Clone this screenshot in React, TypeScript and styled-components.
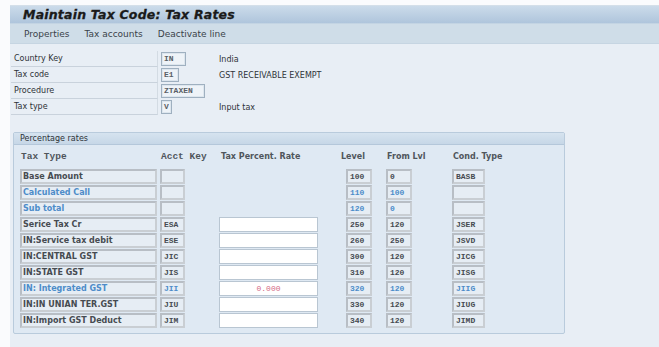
import styled, { createGlobalStyle } from 'styled-components';

const GlobalStyle = createGlobalStyle`
  html, body {
    margin: 0;
    padding: 0;
    background: #fafbfd;
    font-family: "DejaVu Sans", Verdana, sans-serif;
  }
`;

// header fields at the top of the screen
const headerFields = [
    { label: 'Country Key', value: 'IN', width: 25, text: 'India' },
    { label: 'Tax code', value: 'E1', width: 18, text: 'GST RECEIVABLE EXEMPT' },
    { label: 'Procedure', value: 'ZTAXEN', width: 44, text: '' },
    { label: 'Tax type', value: 'V', width: 11, text: 'Input tax' },
];

// percentage rate lines
const rates = [
    { type: 'Base Amount', key: '', rate: null, level: '100', from: '0', cond: 'BASB', blue: false },
    { type: 'Calculated Call', key: '', rate: null, level: '110', from: '100', cond: '', blue: true },
    { type: 'Sub total', key: '', rate: null, level: '120', from: '0', cond: '', blue: true },
    { type: 'Serice Tax Cr', key: 'ESA', rate: '', level: '250', from: '120', cond: 'JSER', blue: false },
    { type: 'IN:Service tax debit', key: 'ESE', rate: '', level: '260', from: '250', cond: 'JSVD', blue: false },
    { type: 'IN:CENTRAL GST', key: 'JIC', rate: '', level: '300', from: '120', cond: 'JICG', blue: false },
    { type: 'IN:STATE GST', key: 'JIS', rate: '', level: '310', from: '120', cond: 'JISG', blue: false },
    { type: 'IN: Integrated GST', key: 'JII', rate: '0.000', level: '320', from: '120', cond: 'JIIG', blue: true },
    { type: 'IN:IN UNIAN TER.GST', key: 'JIU', rate: '', level: '330', from: '120', cond: 'JIUG', blue: false },
    { type: 'IN:Import GST Deduct', key: 'JIM', rate: '', level: '340', from: '120', cond: 'JIMD', blue: false },
];

const MONO = '"Liberation Mono", "DejaVu Sans Mono", monospace';
const SANS = '"DejaVu Sans", Verdana, sans-serif';

const Frame = styled.div`
  margin: 5px 0 0 10px;
  min-height: 342px;
  display: flex;
  flex-direction: column;
`;

const TitleBar = styled.div`
  height: 18px;
  display: flex;
  align-items: center;
  padding-left: 13px;
  background: linear-gradient(#cbdbea, #afc5dc);
  border-top: 1px solid #d4dfe9;
  box-sizing: border-box;
`;

const Title = styled.h1`
  margin: 0;
  font-family: ${SANS};
  font-size: 12.5px;
  font-weight: bold;
  font-style: italic;
  color: #1a1a1a;
  letter-spacing: 0.2px;
  -webkit-text-stroke: 0.3px #1a1a1a;
`;

const Toolbar = styled.div`
  height: 21px;
  display: flex;
  align-items: center;
  gap: 15px;
  padding-left: 14px;
  background: #cfdde8;
  border-top: 1px solid #c3d4e3;
  border-bottom: 1px solid #c6d5e2;
  box-sizing: border-box;
`;

const ToolItem = styled.span`
  font-size: 9px;
  color: #3a4248;
`;

const Content = styled.div`
  flex: 1;
  background: #e8eef5;
  padding: 7px 0 0 1px;
`;

const FieldRow = styled.div`
  height: 16px;
  display: flex;
  align-items: center;
`;

const FieldLabel = styled.div`
  width: 143px;
  height: 15px;
  line-height: 15px;
  padding-left: 3px;
  font-size: 8px;
  color: #2e3338;
  border-bottom: 1px solid #c9d2dc;
  border-right: 1px solid #d3dbe3;
`;

const MonoBox = styled.div<{ $w: number }>`
  width: ${(p) => p.$w}px;
  height: 14px;
  box-sizing: border-box;
  margin-left: 3px;
  padding-left: 2px;
  line-height: 11px;
  font-family: ${MONO};
  font-size: 8px;
  font-weight: bold;
  color: #5a5f66;
  background: #eef3f8;
  border: 1px solid #9fb0c0;
  box-shadow: inset 0 0 0 1px #dde6ee;
`;

const FieldText = styled.span`
  font-size: 8px;
  color: #2e3338;
`;

const Group = styled.div`
  margin: 17px 0 0 2px;
  width: 552px;
  height: 202px;
  box-sizing: border-box;
  background: #dfe9f3;
  border: 1px solid #b9cbdc;
  border-radius: 2px;
`;

const GroupHeader = styled.div`
  height: 11px;
  line-height: 11px;
  padding-left: 6px;
  font-size: 8px;
  color: #2e3338;
  background: linear-gradient(#d6e3ef, #c6d7e7);
  border-bottom: 1px solid #b4c7da;
`;

const Grid = styled.div`
  display: grid;
  grid-template-columns: 140px 59px 127px 40px 66px 32px;
  grid-auto-rows: 16px;
  padding: 7px 0 0 6px;
  align-items: center;
`;

const ColHead = styled.div<{ $mono?: boolean; $shift?: number }>`
  font-family: ${(p) => (p.$mono ? MONO : SANS)};
  font-size: ${(p) => (p.$mono ? 9.5 : 8)}px;
  font-weight: bold;
  color: #50565c;
  margin-left: ${(p) => p.$shift ?? 1}px;
  margin-top: ${(p) => (p.$mono ? -1 : 0)}px;
  white-space: nowrap;
  align-self: start;
`;

const Cell = styled.div<{ $w: number; $blue?: boolean; $mono?: boolean }>`
  width: ${(p) => p.$w}px;
  height: 15px;
  box-sizing: border-box;
  padding-left: ${(p) => (p.$mono ? 2 : 1)}px;
  line-height: 11px;
  font-family: ${(p) => (p.$mono ? MONO : SANS)};
  font-size: 8px;
  font-weight: bold;
  color: ${(p) => (p.$blue ? '#4d8cc9' : '#464b51')};
  background: #e6edf4;
  border: 2px solid #b8bec5;
  border-right-color: #c9ced3;
  border-bottom-color: #c9ced3;
  white-space: nowrap;
  overflow: hidden;
`;

const RateInput = styled.div`
  width: 99px;
  height: 15px;
  box-sizing: border-box;
  line-height: 13px;
  text-align: center;
  font-family: ${MONO};
  font-size: 8px;
  color: #d36a86;
  background: #fff;
  border: 1px solid #b9c6d2;
`;

const Empty = styled.div``;

function App() {
    return (
        <>
            <GlobalStyle />
            <Frame>
                <TitleBar>
                    <Title>Maintain Tax Code: Tax Rates</Title>
                </TitleBar>
                <Toolbar>
                    <ToolItem>Properties</ToolItem>
                    <ToolItem>Tax accounts</ToolItem>
                    <ToolItem>Deactivate line</ToolItem>
                </Toolbar>
                <Content>
                    {headerFields.map((f) => (
                        <FieldRow key={f.label}>
                            <FieldLabel>{f.label}</FieldLabel>
                            <MonoBox $w={f.width}>{f.value}</MonoBox>
                            {f.text && <FieldText style={{ marginLeft: 221 - 163 - f.width }}>{f.text}</FieldText>}
                        </FieldRow>
                    ))}
                    <Group>
                        <GroupHeader>Percentage rates</GroupHeader>
                        <Grid>
                            <ColHead $mono>Tax Type</ColHead>
                            <ColHead $mono>Acct Key</ColHead>
                            <ColHead $shift={2}>Tax Percent. Rate</ColHead>
                            <ColHead $shift={-5}>Level</ColHead>
                            <ColHead>From Lvl</ColHead>
                            <ColHead>Cond. Type</ColHead>
                            {rates.map((r) => (
                                <Row key={r.type} r={r} />
                            ))}
                        </Grid>
                    </Group>
                </Content>
            </Frame>
        </>
    );
}

function Row({ r }: { r: (typeof rates)[number] }) {
    return (
        <>
            <Cell $w={137} $blue={r.blue}>{r.type}</Cell>
            <Cell $w={25} $mono $blue={r.blue}>{r.key}</Cell>
            {r.rate === null ? <Empty /> : <RateInput>{r.rate}</RateInput>}
            <Cell $w={26} $mono $blue={r.blue}>{r.level}</Cell>
            <Cell $w={26} $mono $blue={r.blue}>{r.from}</Cell>
            <Cell $w={33} $mono $blue={r.blue}>{r.cond}</Cell>
        </>
    );
}

export default App;
